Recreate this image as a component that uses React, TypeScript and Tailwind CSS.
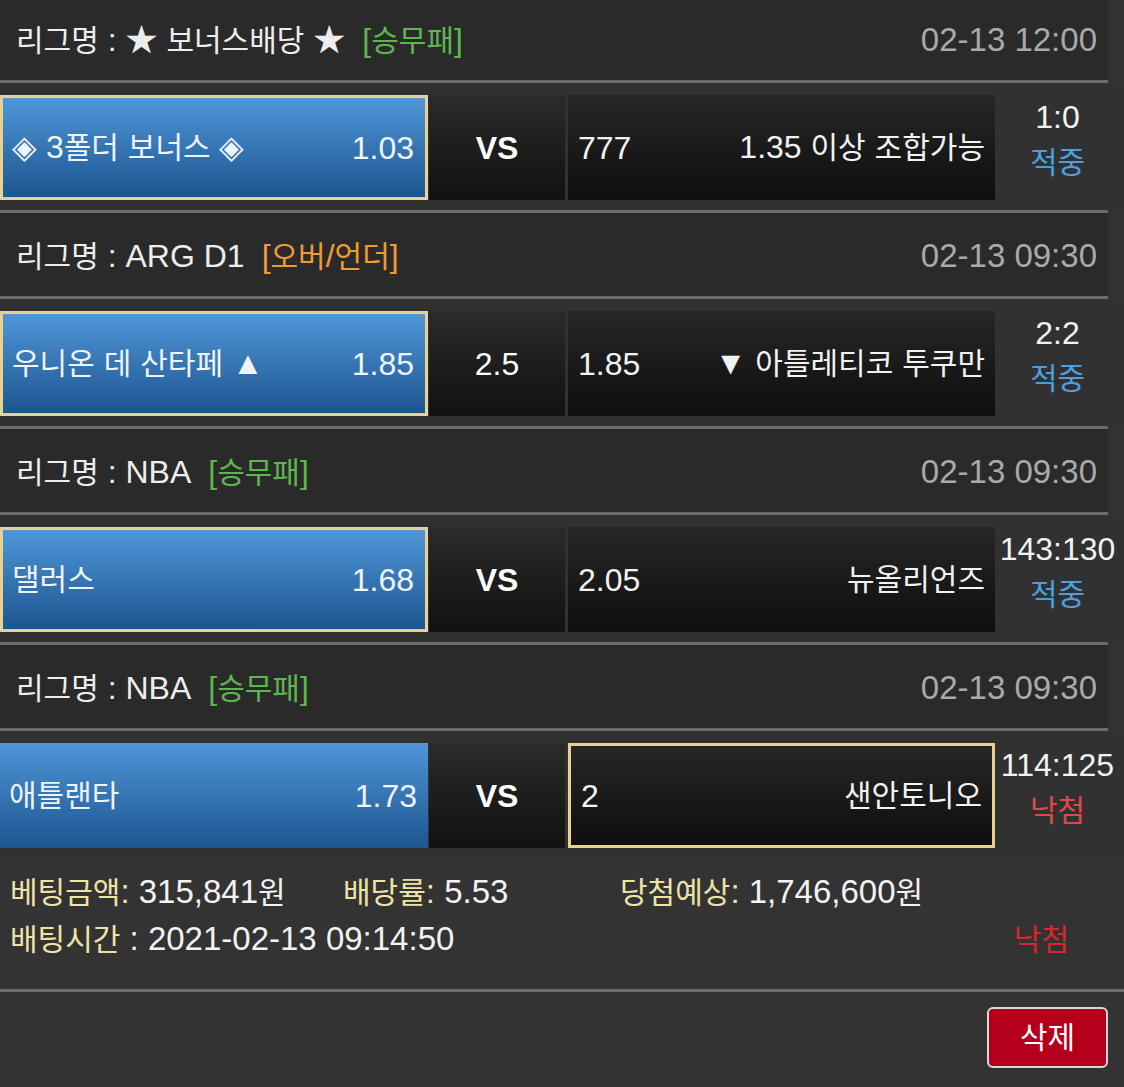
import React from "react";

type Match = {
  league: string;
  type: string;
  typeColor: "green" | "orange";
  date: string;
  home: string;
  homeOdds: string;
  mid: string;
  midBold: boolean;
  awayOdds: string;
  away: string;
  score: string;
  result: "적중" | "낙첨";
  pick: "home" | "away";
};

const matches: Match[] = [
  {
    league: "★ 보너스배당 ★",
    type: "[승무패]",
    typeColor: "green",
    date: "02-13 12:00",
    home: "◈ 3폴더 보너스 ◈",
    homeOdds: "1.03",
    mid: "VS",
    midBold: true,
    awayOdds: "777",
    away: "1.35 이상 조합가능",
    score: "1:0",
    result: "적중",
    pick: "home",
  },
  {
    league: "ARG D1",
    type: "[오버/언더]",
    typeColor: "orange",
    date: "02-13 09:30",
    home: "우니온 데 산타페 ▲",
    homeOdds: "1.85",
    mid: "2.5",
    midBold: false,
    awayOdds: "1.85",
    away: "▼ 아틀레티코 투쿠만",
    score: "2:2",
    result: "적중",
    pick: "home",
  },
  {
    league: "NBA",
    type: "[승무패]",
    typeColor: "green",
    date: "02-13 09:30",
    home: "댈러스",
    homeOdds: "1.68",
    mid: "VS",
    midBold: true,
    awayOdds: "2.05",
    away: "뉴올리언즈",
    score: "143:130",
    result: "적중",
    pick: "home",
  },
  {
    league: "NBA",
    type: "[승무패]",
    typeColor: "green",
    date: "02-13 09:30",
    home: "애틀랜타",
    homeOdds: "1.73",
    mid: "VS",
    midBold: true,
    awayOdds: "2",
    away: "샌안토니오",
    score: "114:125",
    result: "낙첨",
    pick: "away",
  },
];

// hangul runs are set a little smaller so they match the original's width
const HANGUL = /([\uAC00-\uD7A3]+)/;

function T({ children }: { children: string }) {
  const parts = children.split(HANGUL);
  return (
    <>
      {parts.map((p, i) =>
        i % 2 === 1 ? (
          <span key={i} className="text-[30px]">
            {p}
          </span>
        ) : (
          <React.Fragment key={i}>{p}</React.Fragment>
        )
      )}
    </>
  );
}

function Line() {
  return <div className="h-[3px] w-[1108px] bg-[#6c6c6c]" />;
}

function MatchBlock({ m, first }: { m: Match; first: boolean }) {
  const homePicked = m.pick === "home";
  const awayPicked = m.pick === "away";
  return (
    <div>
      {/* league header */}
      <div
        className={`flex w-[1108px] items-center justify-between bg-[#2a2a2a] pl-[16px] pr-[11px] ${
          first ? "h-[80px]" : "h-[83px] pt-[3px]"
        }`}
      >
        <div className="whitespace-nowrap text-[#ededed]">
          <T>{`리그명 : ${m.league}`}</T>
          <span
            className={`ml-[17px] ${
              m.typeColor === "green" ? "text-[#5fb54f]" : "text-[#f19a35]"
            }`}
          >
            <T>{m.type}</T>
          </span>
        </div>
        <div className="text-[33px] text-[#a9a9a9]">{m.date}</div>
      </div>
      <Line />

      {/* match row */}
      <div className="flex h-[127px] items-start bg-[#313131] pt-[12px]">
        <div
          className={`flex h-[105px] w-[428px] items-center justify-between bg-gradient-to-b from-[#4f97d8] to-[#1d5590] pl-[9px] pr-[11px] text-[#eef4fa] ${
            homePicked ? "border-[3px] border-[#e9d18f]" : ""
          }`}
        >
          <span className="whitespace-nowrap">
            <T>{m.home}</T>
          </span>
          <span>{m.homeOdds}</span>
        </div>
        <div
          className={`ml-[1px] flex h-[105px] w-[136px] items-center justify-center bg-gradient-to-b from-[#2b2b2b] to-[#111111] text-white ${
            m.midBold ? "font-bold" : ""
          }`}
        >
          {m.mid}
        </div>
        <div
          className={`ml-[3px] flex h-[105px] w-[427px] items-center justify-between bg-gradient-to-b from-[#272727] to-[#0e0e0e] pl-[10px] pr-[10px] text-[#f2f2f2] ${
            awayPicked ? "border-[3px] border-[#e9d18f]" : ""
          }`}
        >
          <span>{m.awayOdds}</span>
          <span className="whitespace-nowrap">
            <T>{m.away}</T>
          </span>
        </div>
        <div className="flex flex-1 flex-col items-center pr-[4px] leading-[45px]">
          <span className="whitespace-nowrap text-[#f2f2f2]">{m.score}</span>
          <span
            className={
              m.result === "적중" ? "text-[#4d9fe0]" : "text-[#e04848]"
            }
          >
            <T>{m.result}</T>
          </span>
        </div>
      </div>
      {!awayPicked && <Line />}
    </div>
  );
}

export default function App() {
  return (
    <div className="min-h-screen bg-[#333333] font-['Liberation_Sans','Noto_Sans_CJK_KR',sans-serif] text-[32px] leading-[40px]">
      {matches.map((m, i) => (
        <MatchBlock key={i} m={m} first={i === 0} />
      ))}

      {/* bet summary */}
      <div className="pl-[10px] pt-[11px] text-[33px] leading-[46px]">
        <div className="flex whitespace-nowrap">
          <div className="w-[333px]">
            <span className="text-[#eee3a7]">
              <T>베팅금액:</T>
            </span>{" "}
            <span className="text-[#f2f2f2]">
              <T>315,841원</T>
            </span>
          </div>
          <div className="w-[277px]">
            <span className="text-[#eee3a7]">
              <T>배당률:</T>
            </span>{" "}
            <span className="text-[#f2f2f2]">5.53</span>
          </div>
          <div>
            <span className="text-[#eee3a7]">
              <T>당첨예상:</T>
            </span>{" "}
            <span className="text-[#f2f2f2]">
              <T>1,746,600원</T>
            </span>
          </div>
        </div>
        <div className="flex items-center justify-between whitespace-nowrap pr-[55px]">
          <div>
            <span className="text-[#eee3a7]">
              <T>배팅시간</T>
            </span>
            <span className="text-[#f2f2f2]"> : 2021-02-13 09:14:50</span>
          </div>
          <span className="text-[#d8262a]">
            <T>낙첨</T>
          </span>
        </div>
      </div>
      <div className="mt-[26px] h-[3px] w-full bg-[#6c6c6c]" />

      <div className="flex justify-end pr-[16px] pt-[15px] pb-[18px]">
        <button className="flex h-[61px] w-[121px] items-center justify-center rounded-[6px] border-2 border-[#d9d9d9] bg-[#b4001b] text-white">
          <T>삭제</T>
        </button>
      </div>
    </div>
  );
}
